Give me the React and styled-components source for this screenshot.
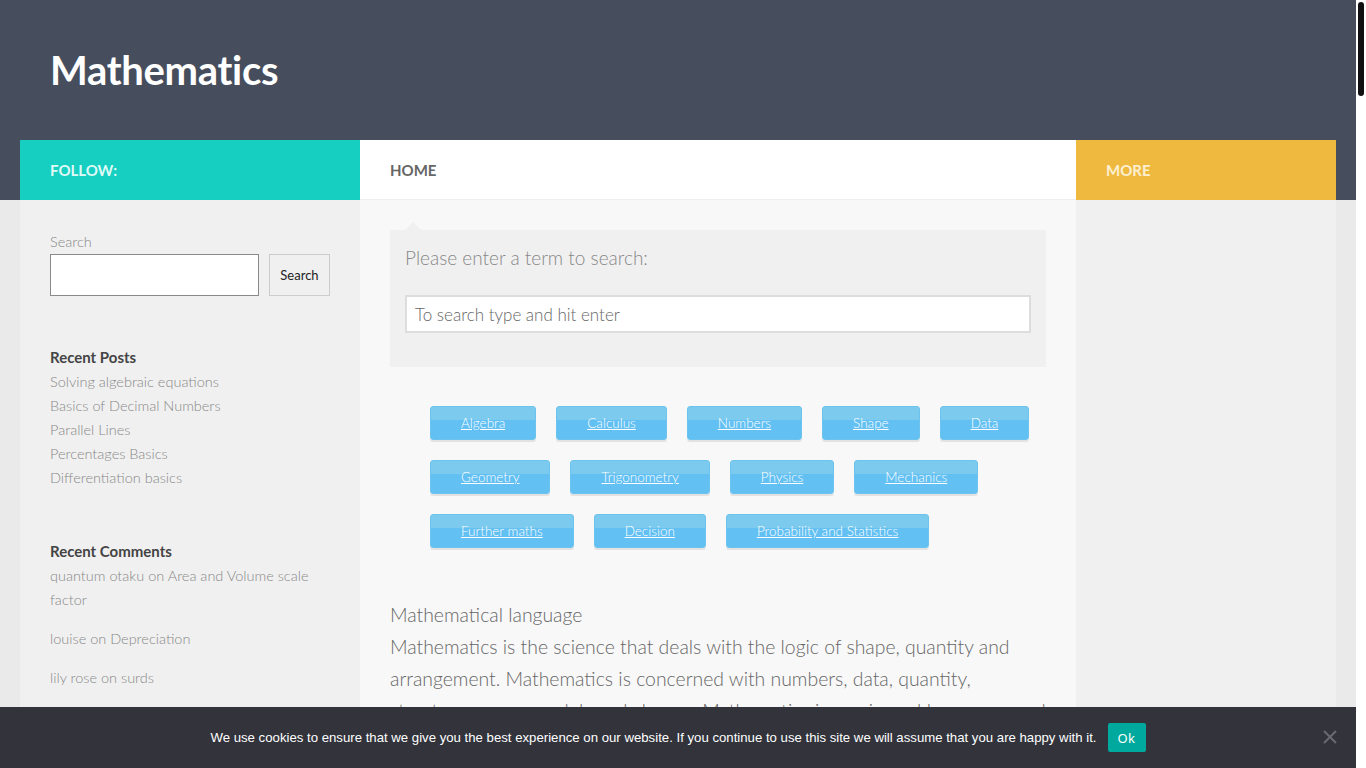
import React from "react";
import styled, { createGlobalStyle } from "styled-components";

const GlobalStyle = createGlobalStyle`
  body {
    margin: 0;
    font-family: Lato, "Liberation Sans", sans-serif;
    background: #fff;
    color: #666;
  }
  * {
    box-sizing: border-box;
  }
`;

const Page = styled.div`
  width: 1356px;
  background: linear-gradient(#464e5e 0, #464e5e 200px, #eaeaea 200px);
`;

const Header = styled.header`
  height: 140px;
  padding: 0 50px;
  display: flex;
  align-items: center;
`;

const SiteTitle = styled.h1`
  margin: 0;
  font-size: 40px;
  font-weight: 700;
  color: #fff;
  letter-spacing: -0.3px;
`;

const Wrapper = styled.div`
  margin: 0 20px;
  display: grid;
  grid-template-columns: 340px minmax(0, 1fr) 260px;
`;

const Column = styled.div`
  display: flex;
  flex-direction: column;
  background: ${(p) => p.$bg};
`;

const NavCell = styled.div`
  height: 60px;
  padding: 0 30px;
  display: flex;
  align-items: center;
  background: ${(p) => p.$bg};
  color: ${(p) => p.$color};
  font-size: 15px;
  font-weight: 700;
  text-transform: uppercase;
  border-bottom: ${(p) => (p.$line ? "1px solid #eee" : "none")};
`;

const SideBody = styled.div`
  padding: 32px 30px 30px;
`;

const Widget = styled.div`
  margin-bottom: 49px;
`;

const Label = styled.div`
  font-size: 14.5px;
  color: #888;
  font-weight: 300;
  line-height: 20px;
  margin-bottom: 2px;
`;

const SearchRow = styled.div`
  display: flex;
  gap: 10px;
`;

const SideInput = styled.div`
  width: 209px;
  height: 42px;
  background: #fff;
  border: 1px solid #8a8a8a;
`;

const SideButton = styled.button`
  width: 61px;
  height: 42px;
  background: #f0f0f0;
  border: 1px solid #ccc;
  font-family: inherit;
  font-size: 13px;
  color: #222;
  padding: 0;
`;

const WidgetTitle = styled.h3`
  margin: 0 0 1px;
  font-size: 15px;
  font-weight: 700;
  color: #444;
  line-height: 24px;
`;

const LinkList = styled.ul`
  list-style: none;
  margin: 0;
  padding: 0;
`;

const LinkItem = styled.li`
  font-size: 14.5px;
  font-weight: 300;
  color: #888;
  line-height: 24px;
  margin-bottom: ${(p) => (p.$spaced ? "15px" : "0")};
`;

const MainBody = styled.main`
  padding: 30px;
`;

const SearchPanel = styled.div`
  position: relative;
  background: #f0f0f0;
  padding: 16px 15px 34px;
  &::before {
    content: "";
    position: absolute;
    top: -8px;
    left: 15px;
    border: 8px solid transparent;
    border-top: 0;
    border-bottom-color: #f0f0f0;
  }
`;

const PanelTitle = styled.div`
  font-size: 19px;
  font-weight: 300;
  color: #888;
  line-height: 24px;
  margin-bottom: 25px;
`;

const BigInput = styled.div`
  height: 38px;
  background: #fff;
  border: 2px solid #ddd;
  padding: 0 8px;
  display: flex;
  align-items: center;
  font-size: 17px;
  font-weight: 300;
  color: #666;
`;

const Tags = styled.div`
  display: flex;
  flex-direction: column;
  gap: 20px;
  padding: 39px 0 0 40px;
`;

const TagRow = styled.div`
  display: flex;
  flex-wrap: wrap;
  gap: 20px;
`;

const Tag = styled.a`
  height: 34px;
  padding: 0 30px;
  display: flex;
  align-items: center;
  border: 1px solid #6cc3ee;
  border-radius: 3px;
  background: linear-gradient(#7dcaef 0, #7dcaef 40%, #62c0f2 40%, #62c0f2 100%);
  box-shadow: 0 2px 0 #e2e2e2;
  color: #fff;
  font-size: 13.5px;
  font-weight: 300;
  text-decoration: underline;
`;

const Article = styled.article`
  padding-top: 51px;
  font-size: 19.4px;
  font-weight: 300;
  color: #666;
  line-height: 32px;
`;

const ArticleTitle = styled.div``;

const Paragraph = styled.p`
  margin: 0 0 20px;
`;

const CookieBar = styled.div`
  position: fixed;
  left: 0;
  bottom: 0;
  width: 1356px;
  height: 61px;
  background: #32333b;
  display: flex;
  align-items: center;
  justify-content: center;
  gap: 11px;
  font-family: "Liberation Sans", Arial, sans-serif;
  font-size: 13.2px;
  color: #fff;
`;

const OkButton = styled.button`
  height: 29px;
  width: 38px;
  border: 0;
  border-radius: 2px;
  background: #00a99d;
  color: #fff;
  font-family: "Noto Sans", sans-serif;
  font-size: 13px;
  letter-spacing: 0.5px;
  padding: 0;
`;

const Close = styled.span`
  position: absolute;
  right: 17px;
  top: 23px;
  width: 16px;
  height: 16px;
`;

const ScrollTrack = styled.div`
  position: fixed;
  top: 0;
  right: 0;
  width: 10px;
  height: 100vh;
  background: #fff;
`;

const ScrollThumb = styled.div`
  margin: 2px 2px 0;
  height: 94px;
  border-radius: 3px;
  background: #111;
`;

const tagRows = [
  ["Algebra", "Calculus", "Numbers", "Shape", "Data"],
  ["Geometry", "Trigonometry", "Physics", "Mechanics"],
  ["Further maths", "Decision", "Probability and Statistics"],
];

const posts = [
  "Solving algebraic equations",
  "Basics of Decimal Numbers",
  "Parallel Lines",
  "Percentages Basics",
  "Differentiation basics",
];

const comments = [
  "quantum otaku on Area and Volume scale factor",
  "louise on Depreciation",
  "lily rose on surds",
];

export default function App() {
  return (
    <>
      <GlobalStyle />
      <Page>
        <Header>
          <SiteTitle>Mathematics</SiteTitle>
        </Header>
        <Wrapper>
          <Column $bg="#f0f0f0">
            <NavCell $bg="#16cfc1" $color="#dffaf6">
              Follow:
            </NavCell>
            <SideBody>
              <Widget>
                <Label>Search</Label>
                <SearchRow>
                  <SideInput />
                  <SideButton>Search</SideButton>
                </SearchRow>
              </Widget>
              <Widget>
                <WidgetTitle>Recent Posts</WidgetTitle>
                <LinkList>
                  {posts.map((p) => (
                    <LinkItem key={p}>{p}</LinkItem>
                  ))}
                </LinkList>
              </Widget>
              <Widget>
                <WidgetTitle>Recent Comments</WidgetTitle>
                <LinkList>
                  {comments.map((c) => (
                    <LinkItem key={c} $spaced>
                      {c}
                    </LinkItem>
                  ))}
                </LinkList>
              </Widget>
            </SideBody>
          </Column>
          <Column $bg="#f8f8f8">
            <NavCell $bg="#fff" $color="#666" $line>
              Home
            </NavCell>
            <MainBody>
              <SearchPanel>
                <PanelTitle>Please enter a term to search:</PanelTitle>
                <BigInput>To search type and hit enter</BigInput>
              </SearchPanel>
              <Tags>
                {tagRows.map((row, i) => (
                  <TagRow key={i}>
                    {row.map((t) => (
                      <Tag key={t}>{t}</Tag>
                    ))}
                  </TagRow>
                ))}
              </Tags>
              <Article>
                <ArticleTitle>Mathematical language</ArticleTitle>
                <Paragraph>
                  Mathematics is the science that deals with the logic of shape,
                  quantity and arrangement. Mathematics is concerned with
                  numbers, data, quantity, structure, space, models and change.
                  Mathematics is a universal language used to describe the world
                  around us.
                </Paragraph>
                <Paragraph>
                  From counting and measuring to solving equations and
                  describing patterns, mathematics gives us the tools to reason
                  clearly and to communicate ideas precisely. Each topic above
                  opens a set of lessons, worked examples and practice
                  questions.
                </Paragraph>
              </Article>
            </MainBody>
          </Column>
          <Column $bg="#f0f0f0">
            <NavCell $bg="#efb93f" $color="#fdf0d2">
              More
            </NavCell>
          </Column>
        </Wrapper>
      </Page>
      <CookieBar>
        <span>
          We use cookies to ensure that we give you the best experience on our
          website. If you continue to use this site we will assume that you are
          happy with it.
        </span>
        <OkButton>Ok</OkButton>
        <Close>
          <svg width="14" height="14" viewBox="0 0 14 14">
            <path d="M1 1 L13 13 M13 1 L1 13" stroke="#6a6b70" strokeWidth="2" />
          </svg>
        </Close>
      </CookieBar>
      <ScrollTrack>
        <ScrollThumb />
      </ScrollTrack>
    </>
  );
}
